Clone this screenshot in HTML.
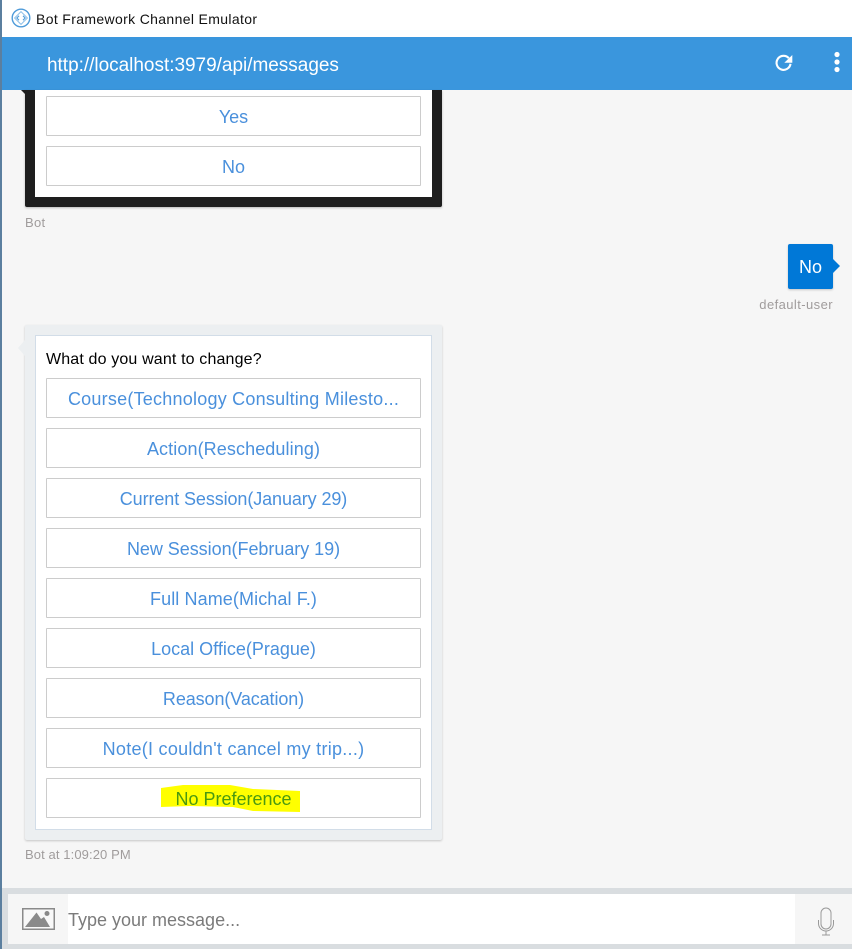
<!DOCTYPE html>
<html>
<head>
<meta charset="utf-8">
<style>
html,body{margin:0;padding:0;width:852px;height:949px;overflow:hidden;background:#f6f6f6;font-family:"Liberation Sans",sans-serif;}
.a{position:absolute;box-sizing:border-box;}
.t{position:absolute;white-space:nowrap;}
.btn{position:absolute;left:46px;width:375px;height:40px;box-sizing:border-box;background:#fff;border:1px solid #ccc;border-radius:1px;color:#4a90dc;font-size:18px;line-height:40px;text-align:center;white-space:nowrap;}
</style>
</head>
<body>
<div class="a" style="left:0;top:0;width:852px;height:37px;background:#fff;"></div>
<div class="a" style="left:0;top:0;width:2px;height:949px;background:#5b7f9f;"></div>
<svg class="a" style="left:11px;top:8px;" width="20" height="20" viewBox="0 0 20 20" fill="none" stroke="#4f9bd9">
<circle cx="10" cy="10" r="8.8" stroke-width="1.4"/>
<path d="M10 3.6L16.4 10L10 16.4L3.6 10Z" stroke-width="1" stroke="#8fc0e8"/>
<path d="M8 7.8L5.8 10L8 12.2M12 7.8L14.2 10L12 12.2" stroke-width="1.1"/>
</svg>
<div class="t" style="left:36px;top:10px;font-size:14px;line-height:18px;color:#111;letter-spacing:0.35px;">Bot Framework Channel Emulator</div>

<div class="a" style="left:2px;top:37px;width:850px;height:53px;background:#3a96dd;"></div>
<div class="t" style="left:47px;top:54px;font-size:19px;line-height:23px;color:#fff;letter-spacing:-0.02px;">http://localhost:3979/api/messages</div>
<svg class="a" style="left:772px;top:51px;" width="24" height="24" viewBox="0 0 24 24" fill="none">
<path d="M16.800 7.200A7 7 0 1 0 18.500 12.800" stroke="#fff" stroke-width="2.100"/>
<path d="M20.300 4V11.800H12.300Z" fill="#fff"/>
</svg>
<svg class="a" style="left:830px;top:50px;" width="14" height="24" viewBox="0 0 14 24" fill="#fff">
<circle cx="7" cy="4.500" r="2.600"/><circle cx="7" cy="12" r="2.600"/><circle cx="7" cy="19.500" r="2.600"/>
</svg>

<!-- first card -->
<div class="a" style="left:25px;top:90px;width:417px;height:117px;background:#1e1e1e;border-radius:0 0 2px 2px;box-shadow:0 1px 2px rgba(0,0,0,.25);"></div>
<div class="a" style="left:21px;top:90px;width:0;height:0;border-top:4px solid transparent;border-right:4px solid #1e1e1e;transform:scaleY(-1);"></div>
<div class="a" style="left:35px;top:90px;width:397px;height:107px;background:#fff;"></div>
<div class="btn" style="top:96px;">Yes</div>
<div class="btn" style="top:146px;">No</div>
<div class="t" style="left:25px;top:215px;font-size:13px;line-height:16px;color:#a09c9c;letter-spacing:0.3px;">Bot</div>

<!-- user message -->
<div class="a" style="left:788px;top:244px;width:45px;height:45px;background:#0078d7;border-radius:2px;box-shadow:0 1px 2px rgba(0,0,0,.2);"></div>
<div class="a" style="left:833px;top:259px;width:0;height:0;border-top:7px solid transparent;border-bottom:7px solid transparent;border-left:7px solid #0078d7;"></div>
<div class="t" style="left:788px;top:244px;width:45px;text-align:center;font-size:18px;line-height:47px;color:#fff;">No</div>
<div class="t" style="left:733px;width:100px;text-align:right;top:297px;font-size:13px;line-height:16px;color:#a09c9c;letter-spacing:0.42px;">default-user</div>

<!-- second card -->
<div class="a" style="left:25px;top:325px;width:417px;height:515px;background:#eceff1;border-radius:2px;box-shadow:0 1px 2px rgba(0,0,0,.2);"></div>
<div class="a" style="left:18px;top:340px;width:0;height:0;border-top:8px solid transparent;border-bottom:8px solid transparent;border-right:7px solid #eceff1;"></div>
<div class="a" style="left:35px;top:335px;width:397px;height:495px;background:#fff;border:1px solid #d2dde8;"></div>
<div class="t" style="left:46px;top:350px;font-size:16px;line-height:20px;color:#000;letter-spacing:0.15px;">What do you want to change?</div>
<div class="btn" style="top:378px;letter-spacing:0.23px;">Course(Technology Consulting Milesto...</div>
<div class="btn" style="top:428px;letter-spacing:0.1px;">Action(Rescheduling)</div>
<div class="btn" style="top:478px;letter-spacing:-0.1px;">Current Session(January 29)</div>
<div class="btn" style="top:528px;letter-spacing:-0.04px;">New Session(February 19)</div>
<div class="btn" style="top:578px;letter-spacing:0.1px;">Full Name(Michal F.)</div>
<div class="btn" style="top:628px;">Local Office(Prague)</div>
<div class="btn" style="top:678px;letter-spacing:-0.1px;">Reason(Vacation)</div>
<div class="btn" style="top:728px;letter-spacing:0.27px;">Note(I couldn't cancel my trip...)</div>
<div class="btn" style="top:778px;"></div>
<svg class="a" style="left:161px;top:785px;" width="140" height="28" viewBox="0 0 140 28">
<path d="M0 3L22 0L69 0L92 4L139 6V27L92 26L72 22L29 21L0 22Z" fill="#ffff00"/>
</svg>
<div class="t" style="left:46px;top:779px;width:375px;text-align:center;font-size:18px;line-height:40px;color:#4a9a10;">No Preference</div>
<div class="t" style="left:25px;top:847px;font-size:13px;line-height:16px;color:#a09c9c;letter-spacing:0.1px;">Bot at 1:09:20 PM</div>

<!-- footer -->
<div class="a" style="left:2px;top:888px;width:850px;height:61px;background:#d9dde0;"></div>
<div class="a" style="left:8px;top:894px;width:844px;height:50px;background:#fff;"></div>
<div class="a" style="left:8px;top:894px;width:60px;height:50px;background:#f6f6f6;"></div>
<div class="a" style="left:795px;top:894px;width:57px;height:50px;background:#f6f6f6;"></div>
<svg class="a" style="left:22px;top:908px;" width="33" height="23" viewBox="0 0 33 23">
<rect x="0.750" y="0.750" width="31.500" height="20.500" fill="#f8f8f8" stroke="#8a8a8a" stroke-width="1.500"/>
<path d="M3 19L14.500 4.500L19 11L22 9L28 19Z" fill="#8a8a8a"/>
<circle cx="25" cy="5.500" r="2.500" fill="#8a8a8a"/>
</svg>
<div class="t" style="left:68px;top:907px;font-size:18px;line-height:26px;color:#7b7b7b;">Type your message...</div>
<svg class="a" style="left:815px;top:906px;" width="22" height="30" viewBox="0 0 22 30" fill="none" stroke="#999" stroke-width="1">
<rect x="6" y="2" width="10" height="21" rx="5"/>
<path d="M3.500 14V17.500A7.500 7.500 0 0 0 18.500 17.500V14M11 25V28.500M7 29H15"/>
</svg>
</body>
</html>
